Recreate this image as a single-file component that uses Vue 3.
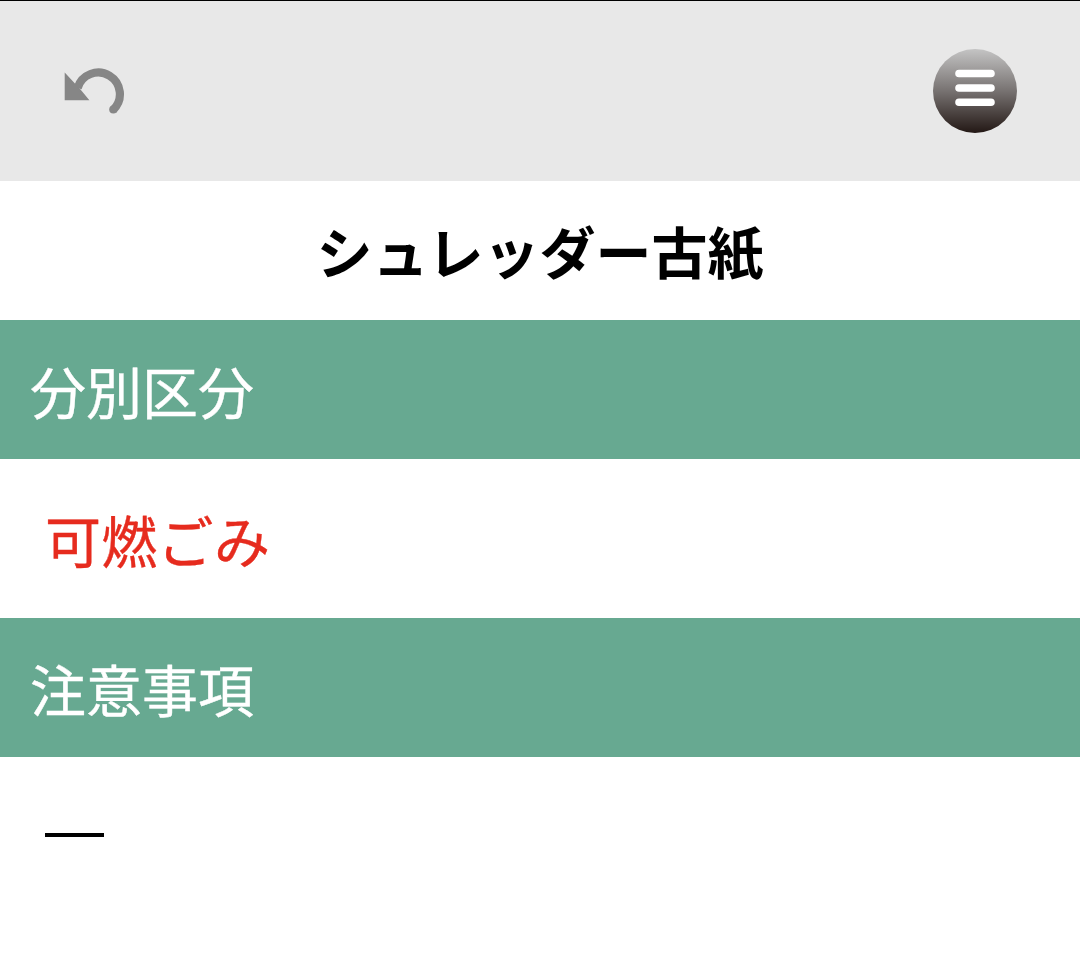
<template>
  <div class="page">
    <header class="header">
      <button class="icon-btn" aria-label="戻る">
        <svg class="back" viewBox="0 0 64 50">
          <path d="M0.7 6.4V34.2H25.4L16.5 23.5L10.7 17.3Z" fill="#868686" />
          <path d="M13.6 22A21.6 21.6 0 1 1 49.3 43.7" fill="none" stroke="#868686" stroke-width="8.2" />
          <circle cx="49.3" cy="43.5" r="4.1" fill="#868686" />
        </svg>
      </button>
      <button class="icon-btn" aria-label="メニュー">
        <svg class="menu" viewBox="0 0 86 86">
          <defs>
            <linearGradient id="menuFill" x1="0" y1="0" x2="0" y2="1">
              <stop offset="0" stop-color="#c4c4c4" />
              <stop offset="0.5" stop-color="#777271" />
              <stop offset="1" stop-color="#231815" />
            </linearGradient>
          </defs>
          <circle cx="43" cy="43" r="42" fill="url(#menuFill)" />
          <path d="M27 25.5H59M27 40H59M27 54.3H59" stroke="#fff" stroke-width="7.6" stroke-linecap="round" />
        </svg>
      </button>
    </header>
    <h1 class="title">シュレッダー古紙</h1>
    <section v-for="item in items" :key="item.label">
      <h2 class="label">{{ item.label }}</h2>
      <p class="value" :class="item.type">{{ item.value }}</p>
    </section>
  </div>
</template>

<script setup>
import { ref } from 'vue';

const items = ref([
  { label: '分別区分', value: '可燃ごみ', type: 'burnable' },
  { label: '注意事項', value: '―', type: 'empty' }
]);
</script>

<style>
body {
  margin: 0;
  background-color: #fff;
}
</style>

<style scoped>
.page {
  min-height: 958px;
  font-family: 'Noto Sans CJK JP', sans-serif;
  font-size: 56px;
  color: #000;
}

.header {
  display: flex;
  justify-content: space-between;
  align-items: center;
  height: 181px;
  padding: 0 62px 0 64px;
  box-sizing: border-box;
  border-top: 1px solid #000;
  background-color: #e8e8e8;
}

.icon-btn {
  padding: 0;
  border: none;
  background: none;
}

.icon-btn svg {
  display: block;
}

.back {
  width: 64px;
  height: 50px;
}

.menu {
  width: 86px;
  height: 86px;
}

.title,
.label,
.value {
  margin: 0;
  box-sizing: border-box;
}

.title {
  height: 139px;
  line-height: 137px;
  font-size: 56px;
  font-weight: 700;
  text-align: center;
}

.label {
  height: 139px;
  padding-left: 30px;
  line-height: 139px;
  font-size: 56px;
  font-weight: 400;
  color: #fff;
  background-color: #67a991;
  -webkit-text-stroke: 0.4px;
}

.value {
  height: 159px;
  padding-left: 45px;
  line-height: 159px;
}

.burnable {
  letter-spacing: 0.3px;
  color: #e62b1e;
  -webkit-text-stroke: 0.4px;
}

.empty {
  line-height: 146px;
  font-family: 'Liberation Sans', 'Noto Sans CJK JP', sans-serif;
  font-size: 59px;
}
</style>
